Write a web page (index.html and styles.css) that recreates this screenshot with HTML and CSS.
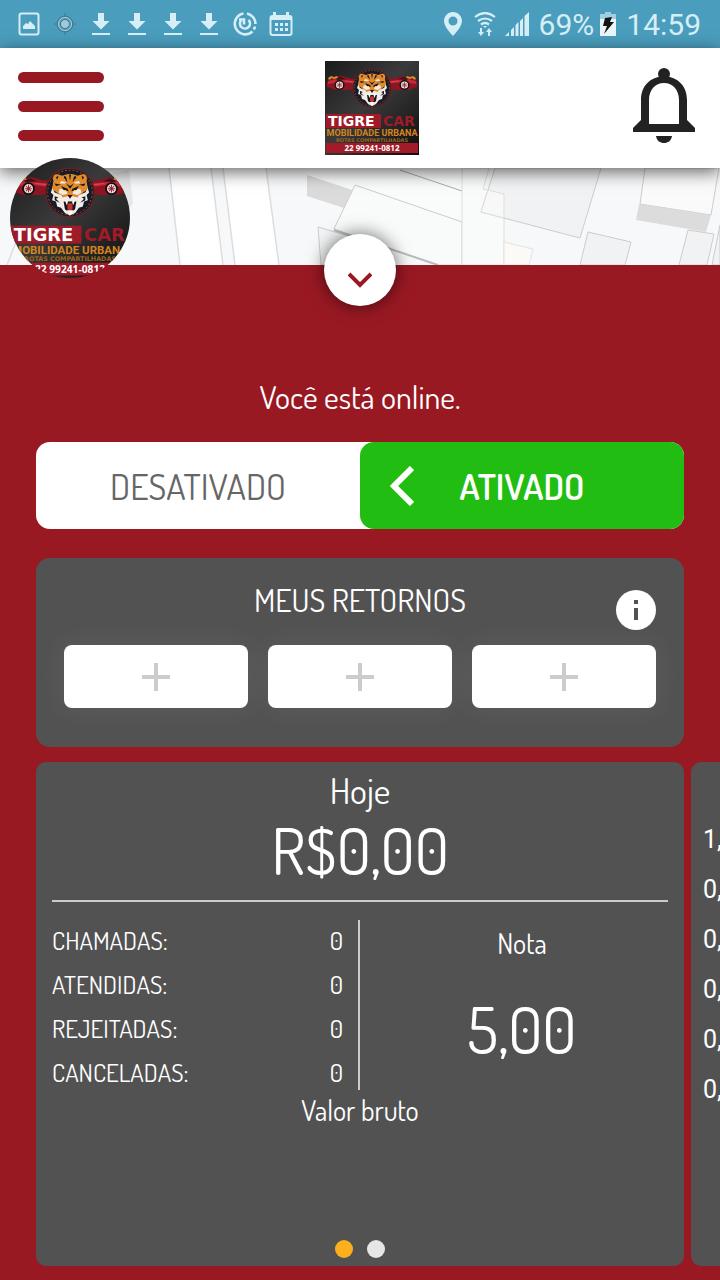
FILE: index.html
```html
<!doctype html>
<html lang="pt-BR">
<head>
    <meta charset="utf-8">
    <meta name="viewport" content="width=device-width, initial-scale=1">
    <title>Tigre Car</title>
    <link rel="stylesheet" href="styles.css">
</head>

<body>

    <!-- shared symbols -->
    <svg class="symbols" aria-hidden="true">
        <defs>
            <linearGradient id="logo-bg" x1="0" y1="0" x2="1" y2="1">
                <stop offset="0" stop-color="#1b1b1c"/>
                <stop offset=".45" stop-color="#3a3a3b"/>
                <stop offset="1" stop-color="#0e0e0f"/>
            </linearGradient>
        </defs>
        <symbol id="download" viewBox="0 0 24 24">
            <path fill="#d6eef6" d="M9 1h6v8h5.500L12 17.500 3.500 9H9zM3 21h18v2H3z"/>
        </symbol>
        <symbol id="car" viewBox="0 0 30 16">
            <path fill="#8d1420" d="M1 7l3-3 5-2 7-1 7 2 7 1v10l-8 1H9L1 12z"/>
            <path fill="#c3283a" d="M2 6l8-2 7 1 13 1v3L17 7 2 9z"/>
            <path fill="#3a1218" d="M9 3l6-1 5 2-9 1z"/>
            <path fill="#d98a2b" d="M2 3l3-2 3 1 3-1 1 2-4 1-2-1-3 2z"/>
            <path stroke="#e0606c" stroke-width=".5" d="M19 6l10 1"/>
            <circle cx="13.500" cy="10" r="5" fill="#111"/>
            <circle cx="13.500" cy="10" r="3.600" fill="#e8e2e0"/>
            <path stroke="#b52635" stroke-width=".8" d="M13.500 7v6M10.500 10h6M11.500 8l4 4M15.500 8l-4 4"/>
            <circle cx="13.500" cy="10" r=".8" fill="#444"/>
        </symbol>
        <symbol id="logo" viewBox="0 0 94 94">
            <rect width="94" height="94" fill="url(#logo-bg)"/>
            <use href="#car" x="1" y="14" width="30" height="16"/>
            <g transform="translate(94 0) scale(-1 1)"><use href="#car" x="1" y="14" width="30" height="16"/></g>
            <circle cx="47" cy="27" r="19" fill="#171a27" stroke="#6b2022" stroke-width="1"/>
            <circle cx="47" cy="27" r="17.500" fill="none" stroke="#b9542e" stroke-width=".7" stroke-dasharray="1.500 1.500"/>
            <!-- tiger head -->
            <path fill="#f1ece8" d="M34 21l-2 6 2 2-1 4 3 1 1 4 3 1 3 4 4 2 4-2 3-4 3-1 1-4 3-1-1-4 2-2-2-6z"/>
            <path fill="#df8a2c" d="M34 18c-1-4 1-6 4-5l3 1c4-2 8-2 12 0l3-1c3-1 5 1 4 5l1 6-4 4-3 1-3 5h-8l-3-5-3-1-4-4z"/>
            <path fill="#f1ece8" d="M39 24l5 1 1 3-4 1-3-2zM55 24l-5 1-1 3 4 1 3-2zM40 18l4 1-1 1-4 0zM54 18l-4 1 1 1 4 0zM41 31l4-1h4l4 1 1 4-3 2-1-3h-6l-1 3-3-2z"/>
            <path fill="#17131a" d="M46.200 13h1.600L47 18zM43 14l1 1 1 4-3-4zM51 14l-1 1-1 4 3-4zM36 15l2-1-1 3zM58 15l-2-1 1 3zM35 20l5 1-4 1zM59 20l-5 1 4 1zM40 22l5 2 1 2-4-1zM54 22l-5 2-1 2 4-1zM34 25l4 3-3-1zM60 25l-4 3 3-1zM45 29h4l-2 3zM42 34h10l-1 6-3 3h-2l-3-3zM35 30l3 1-2 1 3 3-4-2zM59 30l-3 1 2 1-3 3 4-2zM44 20l3 2 3-2-3 4z"/>
            <path fill="#c23430" d="M45 36l2-1 2 1v4l-2 2-2-2z"/>
            <path fill="#fff" d="M43 33l1.500 4 1-3zM51 33l-1.500 4-1-3zM44 41h6l-3 4z"/>
            <path fill="#f3cf46" d="M42 25h2v1h-2zM50 25h2v1h-2z"/>
            <rect x="1" y="53" width="55" height="14" fill="#9f1b28"/>
            <text class="logo-name" x="3" y="65" fill="#fff">TIGRE</text>
            <text class="logo-name" x="58" y="65" fill="#9f1b28">CAR</text>
            <text class="logo-tag" x="47" y="75" text-anchor="middle" fill="#d4841f">MOBILIDADE URBANA</text>
            <text class="logo-small" x="47" y="81" text-anchor="middle" fill="#9a641f">ROTAS COMPARTILHADAS</text>
            <rect x="1" y="82" width="92" height="10" fill="#a11b28"/>
            <text class="logo-phone" x="47" y="90" text-anchor="middle" fill="#fff">22 99241-0812</text>
        </symbol>
    </svg>

    <div class="status-bar">
        <div class="status-icons">
            <svg viewBox="0 0 24 24"><rect x="2.500" y="1.500" width="19" height="21" rx="2" fill="none" stroke="#d6eef6" stroke-width="2"/><path fill="#d6eef6" d="M6 17v-3l3-3 2 1 2-3 2 2 3 3v3z"/></svg>
            <svg viewBox="0 0 24 24"><g fill="none" stroke="#4c7487"><circle cx="12" cy="12" r="8"/><path d="M12 1v4M12 19v4M1 12h4M19 12h4"/></g><circle cx="12" cy="12" r="6.500" fill="none" stroke="#a9cfdd"/><circle cx="12" cy="12" r="4.500" fill="#9fcadb" stroke="#4c7487"/></svg>
            <svg><use href="#download"/></svg>
            <svg><use href="#download"/></svg>
            <svg><use href="#download"/></svg>
            <svg><use href="#download"/></svg>
            <svg viewBox="0 0 24 24"><g fill="none" stroke="#d6eef6" stroke-width="2.600"><path d="M10.500 1.500A10.500 10.500 0 1 0 19.500 19.500M14 1.500a10.500 10.500 0 0 1 8.500 10.500M22 14.500a10 10 0 0 1-1.200 3"/><path d="M8 8.500a5 5 0 1 0 7.500-.5M6 7.500h5v5"/></g></svg>
            <svg viewBox="0 0 24 24"><rect x="1.500" y="4" width="21" height="19" rx="2" fill="none" stroke="#d6eef6" stroke-width="2"/><path fill="#d6eef6" d="M4 0h3v4h10V0h3v4h2v4H2V4h2zM6 11h3v3H6zM11 11h3v3h-3zM16 11h3v3h-3zM6 16h3v3H6zM11 16h3v3h-3zM16 16h3v3h-3z"/></svg>
        </div>
        <div class="status-info">
            <svg viewBox="0 0 24 24"><path fill="#d6eef6" fill-rule="evenodd" d="M12 0c-5 0-9 4-9 9 0 6 9 15 9 15s9-9 9-15c0-5-4-9-9-9zm0 4.500a4.500 4.500 0 1 1 0 9 4.500 4.500 0 0 1 0-9z"/></svg>
            <svg viewBox="0 0 24 24"><g fill="none" stroke="#d6eef6" stroke-width="2.200"><path d="M2 5q10-8 20 0M5 9q7-5 14 0M8 12.500q4-3 8 0"/></g><path fill="#d6eef6" d="M10 14h4l-2 2zM7 16h2v4h2l-3 4-3-4h2zM15 24h2v-4h2l-3-4-3 4h2z"/></svg>
            <svg viewBox="0 0 24 24"><path fill="#d6eef6" d="M0 24l4-4v4zM6 18l3-3v9H6zM10.500 13l3-3v14h-3zM15 9l3-3v18h-3zM19.500 4L24 0v24h-4.500z"/></svg>
            <span class="percent">69%</span>
            <svg class="battery" viewBox="0 0 16 24"><path fill="#9fd0e2" d="M5 0h6v2h5v6H0V2h5z"/><path fill="#eaf6fa" d="M0 7h16v17H0z"/><path fill="#141414" d="M5 6l7-1-2 5h4L4 22l3-8H3z"/></svg>
            <span class="clock">14:59</span>
        </div>
    </div>

    <header class="top-bar">
        <button class="menu" type="button" aria-label="Menu"><i></i><i></i><i></i></button>
        <svg class="logo" role="img" aria-label="Tigre Car"><use href="#logo"/></svg>
        <button class="bell" type="button" aria-label="Notificações">
            <svg viewBox="0 0 64 78">
                <circle cx="32" cy="7" r="6" fill="#222"/>
                <path fill="#222" fill-rule="evenodd" d="M32 9C18 10 9 19 9 33v20L1 61v4h62v-4l-8-8V33C55 19 46 10 32 9zM17 57V33c0-10 6-17 15-17s15 7 15 17v24z"/>
                <path fill="#222" d="M24 69h16c-1 5-4 7-8 7s-7-2-8-7z"/>
            </svg>
        </button>
    </header>

    <div class="map">
        <svg viewBox="0 0 720 97" preserveAspectRatio="xMidYMin slice" aria-hidden="true">
            <rect width="720" height="97" fill="#f7f8fa"/>
            <path fill="#fff" d="M169 0h42l12 97h-43zM223 0h43l13 97h-44z"/>
            <path fill="#e6e7e9" d="M112 5l17-3 4 33-5 8z"/>
            <g stroke="#dcdde0" stroke-width="1.500" fill="none"><path d="M169 0l11 97M211 0l12 97M223 0l12 97M266 0l13 97M7 97l13-33"/></g>
            <g stroke="#ccc" stroke-width="1">
                <path fill="#fafbfb" stroke="none" d="M307 0v7l155 46V0z"/>
                <path fill="#dbdbdb" stroke="none" d="M307 7l45 15-8 18-37-12z"/>
                <path fill="#f3f4f5" d="M318 59l41 12v26h-38z"/>
                <path fill="#f9fbfa" d="M355 17l107 37v43h-25L334 61z"/>
                <path stroke="#bbb" stroke-width="2" d="M334 62l104 35"/>
                <path stroke="#aaa" d="M400 2l62 21"/>
                <path fill="#f9fafa" stroke="#dedede" d="M462 0v97h42V26l-21-5 6-21z"/>
                <path fill="#f1f2f4" d="M495 0l-14 44 99 26L601 0z"/>
                <path fill="#f8f8f8" stroke="#dedede" d="M488 22l16 4v24l-23-6z"/>
                <path fill="#fbfaf7" stroke="#e3e3e0" d="M504 74l29 7-4 16h-25z"/>
                <path fill="#f1f2f4" d="M588 64l43 10-6 23h-45z"/>
                <path fill="#fafafa" d="M645 0l-5 36 71 11 8-47z"/>
                <path fill="#dcdcdc" stroke="none" d="M639 36l72 11-5 17-70-12z"/>
                <path fill="#f1f2f4" d="M688 62l26 4-7 31h-28zM720 57l-8 40h8z"/>
            </g>
        </svg>
        <svg class="avatar" role="img" aria-label="Perfil"><use href="#logo"/></svg>
    </div>

    <main class="sheet">
        <button class="collapse" type="button" aria-label="Recolher">
            <svg viewBox="0 0 24 16"><path fill="none" stroke="#991923" stroke-width="4" d="M1 2l11 11L23 2"/></svg>
        </button>

        <p class="online">Você está online.</p>

        <div class="toggle">
            <button type="button" aria-pressed="false">DESATIVADO</button>
            <button class="on" type="button" aria-pressed="true">
                <svg viewBox="0 0 24 40"><path fill="none" stroke="#fff" stroke-width="6" d="M22 2L4 20l18 18"/></svg>
                <span>ATIVADO</span>
            </button>
        </div>

        <section class="returns">
            <div class="returns-head">
                <h2>MEUS RETORNOS</h2>
                <button class="info" type="button" aria-label="Informações">
                    <svg viewBox="0 0 40 40"><circle cx="20" cy="20" r="20" fill="#fff"/><path fill="#525252" d="M18 10h4v4h-4zM18 18h4v12h-4z"/></svg>
                </button>
            </div>
            <div class="slots">
                <button type="button" aria-label="Adicionar retorno 1"></button>
                <button type="button" aria-label="Adicionar retorno 2"></button>
                <button type="button" aria-label="Adicionar retorno 3"></button>
            </div>
        </section>

        <div class="carousel">
            <section class="card today">
                <h2>Hoje</h2>
                <p class="amount">R$0,00</p>
                <div class="stats">
                    <dl>
                        <div><dt>CHAMADAS:</dt><dd>0</dd></div>
                        <div><dt>ATENDIDAS:</dt><dd>0</dd></div>
                        <div><dt>REJEITADAS:</dt><dd>0</dd></div>
                        <div><dt>CANCELADAS:</dt><dd>0</dd></div>
                    </dl>
                    <div class="rating">
                        <h3>Nota</h3>
                        <p class="amount">5,00</p>
                    </div>
                </div>
                <p class="gross">Valor bruto</p>
                <div class="dots"><i class="active"></i><i></i></div>
            </section>
            <section class="card next">
                <p>1,00</p>
                <p>0,00</p>
                <p>0,00</p>
                <p>0,00</p>
                <p>0,00</p>
                <p>0,00</p>
            </section>
        </div>
    </main>

</body>
</html>
```
FILE: styles.css
```css
* {
    box-sizing: border-box;
}
body {
    margin: 0;
    min-height: 100vh;
    display: flex;
    flex-direction: column;
    overflow-x: hidden;
    background: #991923;
    color: #fff;
    font-family: "Dosis", "Liberation Sans Narrow", "Roboto Condensed", "Open Sans Condensed", "Roboto", sans-serif;
    font-weight: 400;
}
h2, h3, p, dl, dd {
    margin: 0;
    font-weight: 400;
}
button {
    padding: 0;
    border: 0;
    background: none;
    color: inherit;
    font: inherit;
    cursor: pointer;
}
svg {
    display: block;
}
.symbols {
    position: absolute;
    width: 0;
    height: 0;
}

/* logo lettering */
.logo-name {
    font: bold 14px "DejaVu Sans", sans-serif;
}
.logo-tag {
    font: bold 9px "Roboto", sans-serif;
}
.logo-small {
    font: bold 5px "DejaVu Sans", sans-serif;
}
.logo-phone {
    font: bold 8px "Noto Sans", sans-serif;
}

/* status bar */
.status-bar {
    display: flex;
    justify-content: space-between;
    align-items: center;
    height: 48px;
    padding: 0 19px 0 17px;
    background: #4a9dbd;
    color: #d6eef6;
    font-family: "Roboto", sans-serif;
    font-size: 30px;
    font-weight: 400;
}
.status-icons, .status-info {
    display: flex;
    align-items: center;
}
.status-icons {
    gap: 12px;
}
.status-info {
    gap: 8px;
}
.status-bar svg {
    width: 24px;
    height: 24px;
}
.status-bar .battery {
    width: 16px;
}
.percent {
    margin: 0 -2px 0 2px;
}
.clock {
    margin-left: 2px;
}

/* header */
.top-bar {
    position: relative;
    z-index: 1;
    display: grid;
    grid-template-columns: 1fr auto 1fr;
    align-items: center;
    height: 120px;
    padding: 0 24px 0 18px;
    background: #fff;
    box-shadow: 0 4px 16px rgba(0, 0, 0, .6);
}
.menu {
    display: flex;
    flex-direction: column;
    gap: 18px;
    width: 86px;
    padding-bottom: 4px;
}
.menu i {
    height: 11px;
    border-radius: 6px;
    background: #991923;
}
.logo {
    width: 94px;
    height: 94px;
    margin-left: 30px;
}
.bell {
    justify-self: end;
    padding-bottom: 4px;
}
.bell svg {
    width: 64px;
    height: 78px;
}

/* map */
.map {
    position: relative;
    height: 97px;
}
.map > svg:first-child {
    width: 100%;
    height: 100%;
}
.avatar {
    position: absolute;
    z-index: 3;
    left: 10px;
    top: -10px;
    width: 120px;
    height: 120px;
    border-radius: 50%;
}

/* sheet */
.sheet {
    position: relative;
    flex: 1;
    display: flex;
    flex-direction: column;
    padding: 112px 36px 14px;
    background: #991923;
}
.collapse {
    position: absolute;
    top: -31px;
    left: 50%;
    width: 72px;
    height: 72px;
    margin-left: -36px;
    padding-top: 20px;
    border-radius: 50%;
    background: #fff;
    box-shadow: 0 0 18px rgba(0, 0, 0, .6);
}
.collapse svg {
    width: 24px;
    height: 16px;
    margin: 0 auto;
}
.online {
    font-size: 32px;
    line-height: 40px;
    text-align: center;
}

/* on / off switch */
.toggle {
    display: grid;
    grid-template-columns: 1fr 1fr;
    height: 87px;
    margin-top: 25px;
    border-radius: 14px;
    background: #fff;
    color: #666;
    font-size: 36px;
}
.toggle .on {
    display: grid;
    grid-template-columns: 24px 1fr 24px;
    align-items: center;
    padding: 0 30px;
    border-radius: 14px;
    background: #22bd12;
    color: #fff;
    font-weight: 600;
}
.toggle .on svg {
    width: 24px;
    height: 40px;
}

/* cards */
.returns {
    margin-top: 29px;
    padding: 22px 28px 39px;
    border-radius: 14px;
    background: #525252;
}
.returns-head {
    display: grid;
    grid-template-columns: 40px 1fr 40px;
}
.returns h2 {
    grid-column: 2;
    font-size: 32px;
    line-height: 40px;
    text-align: center;
}
.info {
    margin-top: 10px;
}
.slots {
    display: grid;
    grid-template-columns: repeat(3, 1fr);
    gap: 20px;
    margin-top: 15px;
}
.slots button {
    height: 63px;
    border-radius: 8px;
    background:
        linear-gradient(#ccc, #ccc) center / 28px 4px no-repeat,
        linear-gradient(#ccc, #ccc) center / 4px 28px no-repeat,
        #fff;
    box-shadow: 0 0 30px rgba(255, 255, 255, .08);
}
.carousel {
    flex: 1;
    display: flex;
    gap: 7px;
    margin: 15px -36px 0 0;
    padding-right: 36px;
    overflow: hidden;
}
.card {
    flex: 0 0 100%;
    min-height: 504px;
    border-radius: 10px;
    background: #525252;
}
.today {
    display: flex;
    flex-direction: column;
    padding: 8px 16px;
    text-align: center;
}
.today h2 {
    font-size: 36px;
    line-height: 40px;
}
.amount {
    font-size: 64px;
    line-height: 80px;
}
.stats {
    display: grid;
    grid-template-columns: 1fr 1fr;
    margin-top: 10px;
    padding-top: 18px;
    border-top: 2px solid #ccc;
}
.stats dl {
    height: 170px;
    margin-top: 0;
    padding-right: 15px;
    border-right: 2px solid #ccc;
    font-size: 25px;
    line-height: 44px;
}
.stats dl div {
    display: flex;
    justify-content: space-between;
    margin-top: -2px;
    margin-bottom: 2px;
}
.rating {
    padding: 3px 0 0 16px;
}
.rating h3, .gross {
    font-size: 28px;
    line-height: 40px;
}
.rating .amount {
    margin-top: 26px;
}
.dots {
    display: flex;
    justify-content: center;
    gap: 14px;
    margin-top: auto;
}
.dots i {
    width: 18px;
    height: 18px;
    border-radius: 50%;
    background: #e6e6e6;
}
.dots .active {
    background: #fdb01d;
}
.next {
    padding: 53px 12px;
    font-family: "Roboto", sans-serif;
    font-size: 25px;
    line-height: 50px;
}
```
